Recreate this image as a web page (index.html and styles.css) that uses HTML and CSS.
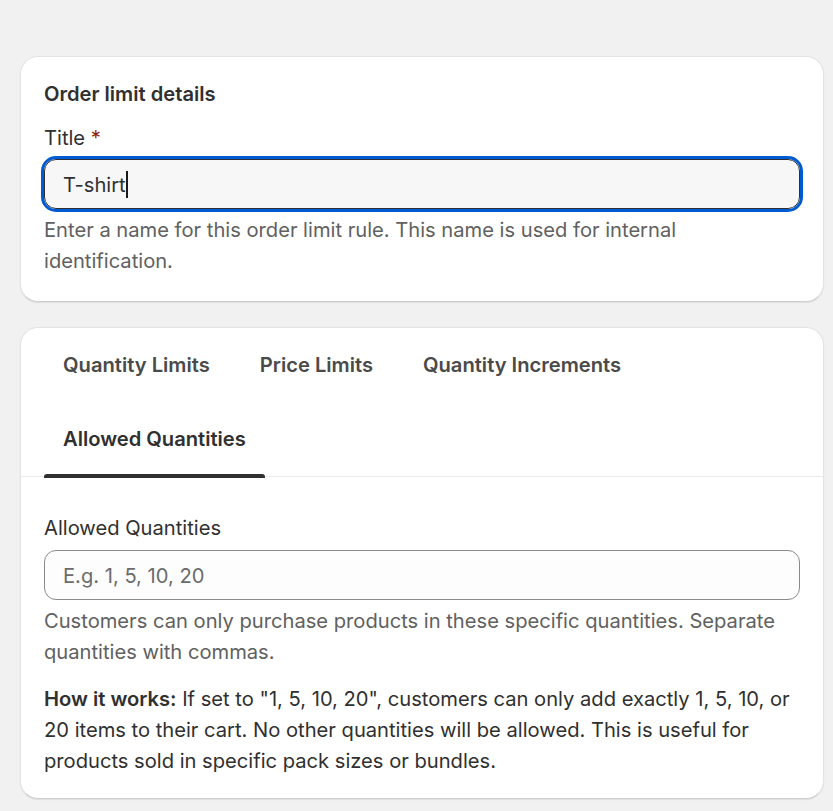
FILE: index.html
```html
<!DOCTYPE html>
<html lang="en">
  <head>
    <meta charset="UTF-8" />
    <meta name="viewport" content="width=device-width, initial-scale=1.0" />
    <title>Order Limit</title>
    <link rel="stylesheet" href="styles.css">
  </head>
  <body>
    <div class="page">
      <!-- Details card -->
      <div class="card">
        <h2 class="card-title">Order limit details</h2>
        <div class="field">
          <label class="label" for="title">Title <span class="required">*</span></label>
          <div class="input input-focused" id="title" role="textbox">
            <span>T-shirt</span><span class="caret"></span>
          </div>
          <p class="help">Enter a name for this order limit rule. This name is used for internal identification.</p>
        </div>
      </div>

      <!-- Limits card -->
      <div class="card card-tabs">
        <div class="tabs">
          <button class="tab">Quantity Limits</button>
          <button class="tab">Price Limits</button>
          <button class="tab">Quantity Increments</button>
          <button class="tab active">Allowed Quantities</button>
        </div>
        <div class="tab-panel">
          <div class="field">
            <label class="label" for="allowed">Allowed Quantities</label>
            <input class="input" type="text" id="allowed" placeholder="E.g. 1, 5, 10, 20" />
            <p class="help">Customers can only purchase products in these specific quantities. Separate quantities with commas.</p>
          </div>
          <p class="note"><strong>How it works:</strong> If set to "1, 5, 10, 20", customers can only add exactly 1, 5, 10, or 20 items to their cart. No other quantities will be allowed. This is useful for products sold in specific pack sizes or bundles.</p>
        </div>
      </div>
    </div>
  </body>
</html>
```

FILE: styles.css
```css
body {
  margin: 0;
  background: #f1f1f1;
  font-family: Inter, "Noto Sans", sans-serif;
  font-size: 20.15px;
  line-height: 31px;
  color: #303030;
}

.page {
  padding: 56px 9px 12px 20px;
  display: flex;
  flex-direction: column;
  gap: 25px;
}

.card {
  background: #fff;
  border: 1px solid #e3e3e3;
  border-bottom-color: #cfcfcf;
  border-radius: 18px;
  box-shadow: 0 1px 1px rgba(0, 0, 0, 0.08);
  padding: 23px 23px 25px;
}

.card-title {
  margin: 0 0 14px;
  font-size: 20.15px;
  line-height: 28px;
  font-weight: 600;
}

.field {
  display: flex;
  flex-direction: column;
}

.label {
  display: block;
  margin-bottom: 6px;
}

.required {
  color: #8e1f0b;
}

.input {
  box-sizing: border-box;
  height: 50px;
  width: 100%;
  padding: 0 18px;
  border: 1px solid #8a8a8a;
  border-radius: 12px;
  background: #fdfdfd;
  font: inherit;
  color: #303030;
  display: flex;
  align-items: center;
}

.input::placeholder {
  color: #6b6b6b;
}

.input-focused {
  border-color: #303030;
  background: #f7f7f7;
  outline: 3px solid #005bd3;
  outline-offset: 0;
}

.caret {
  display: inline-block;
  width: 2px;
  height: 27px;
  background: #1a1a1a;
}

.help {
  margin: 5px 0 0;
  color: #616161;
}

/* Tabs */
.card-tabs {
  padding: 0 0 22px;
}

.tabs {
  display: flex;
  flex-wrap: wrap;
  column-gap: 12px;
  padding: 0 23px;
  border-bottom: 1px solid #ebebeb;
}

.tab {
  position: relative;
  height: 74px;
  padding: 0 19px 2px;
  border: none;
  background: none;
  font: inherit;
  font-weight: 600;
  color: #4a4a4a;
  cursor: pointer;
}

.tab.active {
  color: #303030;
}

.tab.active::after {
  content: "";
  position: absolute;
  left: 0;
  right: 0;
  bottom: -2px;
  height: 4px;
  background: #303030;
  border-radius: 3px 3px 0 0;
}

.tab-panel {
  padding: 35px 23px 0;
}

.tab-panel .label {
  margin-bottom: 7px;
}

.note {
  margin: 16px 0 0;
}

.note strong {
  font-weight: 600;
}
```
